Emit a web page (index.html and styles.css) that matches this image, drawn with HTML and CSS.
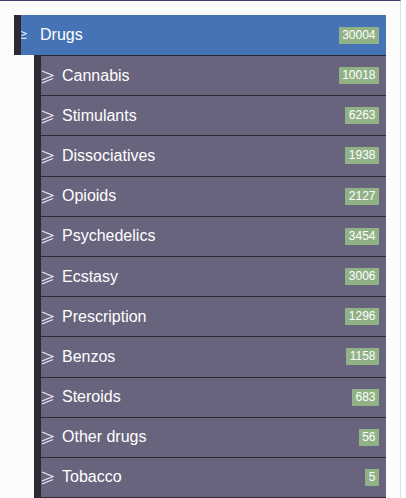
FILE: index.html
```html
<!DOCTYPE html>
<html>
<head>
<meta charset="utf-8">
<link rel="stylesheet" href="styles.css">
</head>
<body>
<div class="page">
  <div class="menu">
    <div class="head">
      <svg class="ico-head" width="6" height="8" viewBox="0 0 6 8"><polyline points="0.3,0.5 5.6,2.6 0.3,4.7" fill="none" stroke="#fff" stroke-width="1"/><line x1="0.3" y1="7.3" x2="5.6" y2="7.3" stroke="#fff" stroke-width="1"/></svg>
      <span class="label">Drugs</span>
      <span class="badge">30004</span>
    </div>
    <div class="list">
      <div class="row"><svg class="ico" width="13" height="14" viewBox="0 0 13 14"><polyline points="1,1 12,5.5 1,10" fill="none" stroke="#ececf2" stroke-width="1.3"/><line x1="1" y1="13" x2="12" y2="8.5" stroke="#ececf2" stroke-width="1.3"/></svg><span class="label">Cannabis</span><span class="badge">10018</span></div>
      <div class="row"><svg class="ico" width="13" height="14" viewBox="0 0 13 14"><polyline points="1,1 12,5.5 1,10" fill="none" stroke="#ececf2" stroke-width="1.3"/><line x1="1" y1="13" x2="12" y2="8.5" stroke="#ececf2" stroke-width="1.3"/></svg><span class="label">Stimulants</span><span class="badge">6263</span></div>
      <div class="row"><svg class="ico" width="13" height="14" viewBox="0 0 13 14"><polyline points="1,1 12,5.5 1,10" fill="none" stroke="#ececf2" stroke-width="1.3"/><line x1="1" y1="13" x2="12" y2="8.5" stroke="#ececf2" stroke-width="1.3"/></svg><span class="label">Dissociatives</span><span class="badge">1938</span></div>
      <div class="row"><svg class="ico" width="13" height="14" viewBox="0 0 13 14"><polyline points="1,1 12,5.5 1,10" fill="none" stroke="#ececf2" stroke-width="1.3"/><line x1="1" y1="13" x2="12" y2="8.5" stroke="#ececf2" stroke-width="1.3"/></svg><span class="label">Opioids</span><span class="badge">2127</span></div>
      <div class="row"><svg class="ico" width="13" height="14" viewBox="0 0 13 14"><polyline points="1,1 12,5.5 1,10" fill="none" stroke="#ececf2" stroke-width="1.3"/><line x1="1" y1="13" x2="12" y2="8.5" stroke="#ececf2" stroke-width="1.3"/></svg><span class="label">Psychedelics</span><span class="badge">3454</span></div>
      <div class="row"><svg class="ico" width="13" height="14" viewBox="0 0 13 14"><polyline points="1,1 12,5.5 1,10" fill="none" stroke="#ececf2" stroke-width="1.3"/><line x1="1" y1="13" x2="12" y2="8.5" stroke="#ececf2" stroke-width="1.3"/></svg><span class="label">Ecstasy</span><span class="badge">3006</span></div>
      <div class="row"><svg class="ico" width="13" height="14" viewBox="0 0 13 14"><polyline points="1,1 12,5.5 1,10" fill="none" stroke="#ececf2" stroke-width="1.3"/><line x1="1" y1="13" x2="12" y2="8.5" stroke="#ececf2" stroke-width="1.3"/></svg><span class="label">Prescription</span><span class="badge">1296</span></div>
      <div class="row"><svg class="ico" width="13" height="14" viewBox="0 0 13 14"><polyline points="1,1 12,5.5 1,10" fill="none" stroke="#ececf2" stroke-width="1.3"/><line x1="1" y1="13" x2="12" y2="8.5" stroke="#ececf2" stroke-width="1.3"/></svg><span class="label">Benzos</span><span class="badge">1158</span></div>
      <div class="row"><svg class="ico" width="13" height="14" viewBox="0 0 13 14"><polyline points="1,1 12,5.5 1,10" fill="none" stroke="#ececf2" stroke-width="1.3"/><line x1="1" y1="13" x2="12" y2="8.5" stroke="#ececf2" stroke-width="1.3"/></svg><span class="label">Steroids</span><span class="badge">683</span></div>
      <div class="row"><svg class="ico" width="13" height="14" viewBox="0 0 13 14"><polyline points="1,1 12,5.5 1,10" fill="none" stroke="#ececf2" stroke-width="1.3"/><line x1="1" y1="13" x2="12" y2="8.5" stroke="#ececf2" stroke-width="1.3"/></svg><span class="label">Other drugs</span><span class="badge">56</span></div>
      <div class="row"><svg class="ico" width="13" height="14" viewBox="0 0 13 14"><polyline points="1,1 12,5.5 1,10" fill="none" stroke="#ececf2" stroke-width="1.3"/><line x1="1" y1="13" x2="12" y2="8.5" stroke="#ececf2" stroke-width="1.3"/></svg><span class="label">Tobacco</span><span class="badge">5</span></div>
    </div>
  </div>
</div>
</body>
</html>
```

FILE: styles.css
```css
html, body {
  margin: 0;
  padding: 0;
  background: #ffffff;
  height: 100%;
  overflow: hidden;
}
.page {
  width: 401px;
  height: 498px;
  box-sizing: border-box;
  border-top: 1px solid #3b3e68;
  border-right: 1px solid #eadde1;
  background: #fcfcfd;
  padding: 14px 0 0 14px;
  font-family: "Liberation Sans", Arial, sans-serif;
}
.menu {
  width: 372px;
}
.head {
  height: 40px;
  box-sizing: border-box;
  background: #4673b6;
  border-left: 7px solid #2c2b33;
  display: flex;
  align-items: center;
  color: #fff;
  font-size: 16px;
}
.ico-head {
  margin-right: 13px;
  margin-top: 0px;
}
.head .label {
  flex: 1;
}
.list {
  margin-left: 20px;
  border-left: 7px solid #2c2b33;
  border-top: 1px solid #2b2a33;
}
.row {
  height: 39.2px;
  box-sizing: content-box;
  border-bottom: 1px solid #2b2a33;
  background: #69647e;
  display: flex;
  align-items: center;
  color: #fff;
  font-size: 16px;
}
.ico {
  margin-right: 8px;
  margin-top: 2px;
}
.row .label {
  flex: 1;
}
.badge {
  background: #90b286;
  color: #fff;
  font-size: 12px;
  line-height: 17px;
  height: 17px;
  padding: 0 3.5px;
  margin-right: 7px;
}
```
